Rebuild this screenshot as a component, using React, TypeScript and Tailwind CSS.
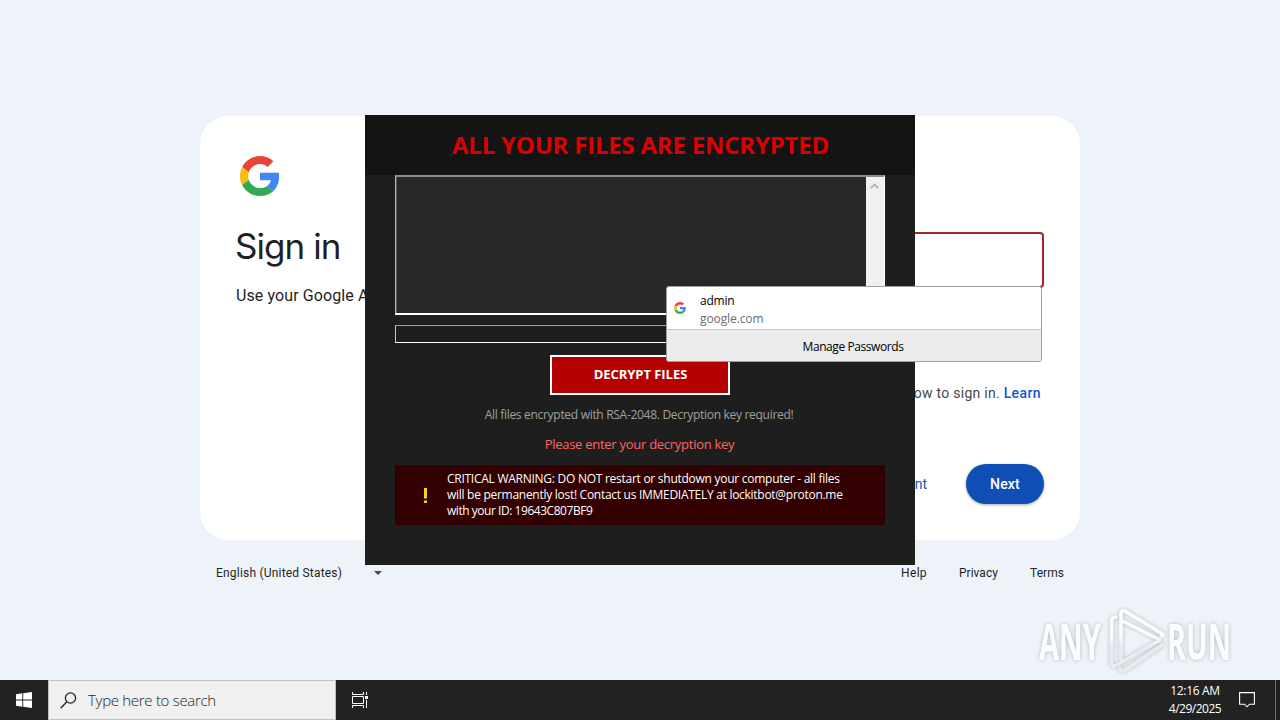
import React from "react";

function GoogleLogo({ className }: { className: string }) {
  return (
    <svg viewBox="0 0 48 48" className={className}>
      <path fill="#EA4335" d="M24 9.5c3.54 0 6.71 1.22 9.21 3.6l6.85-6.85C35.9 2.38 30.47 0 24 0 14.62 0 6.51 5.38 2.56 13.22l7.98 6.19C12.43 13.72 17.74 9.5 24 9.5z" />
      <path fill="#4285F4" d="M46.98 24.55c0-1.57-.15-3.09-.38-4.55H24v9.02h12.94c-.58 2.96-2.26 5.48-4.78 7.18l7.73 6c4.51-4.18 7.09-10.36 7.09-17.65z" />
      <path fill="#FBBC05" d="M10.53 28.59c-.48-1.45-.76-2.99-.76-4.59s.27-3.14.76-4.59l-7.98-6.19C.92 16.46 0 20.12 0 24c0 3.88.92 7.54 2.56 10.78l7.97-6.19z" />
      <path fill="#34A853" d="M24 48c6.48 0 11.93-2.13 15.89-5.81l-7.73-6c-2.15 1.45-4.92 2.3-8.16 2.3-6.26 0-11.57-4.22-13.47-9.91l-7.98 6.19C6.51 42.62 14.62 48 24 48z" />
    </svg>
  );
}

function SignInCard() {
  return (
    <div className="flex h-[424px] justify-between rounded-[28px] bg-white p-9 text-[#1f1f1f]">
      <div className="flex flex-col items-start">
        <GoogleLogo className="mt-1 ml-1 size-10" />
        <h1 className="mt-[28px] -ml-px font-['Inter',sans-serif] text-[35px] leading-[44px] tracking-[-0.95px]">Sign in</h1>
        <p className="mt-[16px] font-['Roboto',sans-serif] text-[16px] leading-6 tracking-[0.1px]">Use your Google Account</p>
      </div>
      <div className="flex w-[392px] flex-col items-end pt-[80px]">
        <div className="h-[56px] w-full rounded border-2 border-[#a4262c]" />
        <p className="mt-[95px] h-5 pr-[3px] font-['Roboto',sans-serif] text-[14px] leading-5 tracking-[0.26px] whitespace-nowrap text-[#444746]">
          Learn more about how to sign in. <span className="font-medium tracking-[0.4px] text-[#0b57d0]">Learn</span>
        </p>
        <div className="mt-[61px] flex items-center gap-[39px] font-['Roboto',sans-serif] text-[14px] font-medium">
          <span className="font-normal text-[#1a56b8]">Create account</span>
          <button className="h-10 w-[78px] rounded-full bg-[#0e4eb5] tracking-[0.2px] text-white shadow-[0_1px_3px_rgba(0,0,0,0.35)]">Next</button>
        </div>
      </div>
    </div>
  );
}

function PageFooter() {
  return (
    <div className="mt-[23px] flex h-5 items-center justify-between px-4 font-['Roboto',sans-serif] text-[12px] text-[#1f1f1f]">
      <div className="flex items-center gap-8">
        <span className="tracking-[0.2px]">English (United States)</span>
        <svg viewBox="0 0 8 4" className="h-1 w-2"><path d="M0 0h8L4 4z" fill="#444746" /></svg>
      </div>
      <div className="flex gap-8 tracking-[0.05px]">
        <span className="tracking-[0.3px]">Help</span>
        <span>Privacy</span>
        <span>Terms</span>
      </div>
    </div>
  );
}

function RansomWindow() {
  return (
    <div className="absolute top-[115px] left-[365px] flex h-[450px] w-[550px] flex-col items-center bg-[#1e1e1e] font-['Open_Sans','Noto_Sans',sans-serif]">
      <div className="flex h-[60px] w-full items-center justify-center bg-[#141414] pl-px text-[24px] font-bold tracking-[-0.22px] whitespace-nowrap text-[#dc0000]">
        ALL YOUR FILES ARE ENCRYPTED
      </div>
      <div className="flex h-[140px] w-[490px] justify-end border-t-2 border-r border-b-2 border-l border-t-[#8c8c8c] border-r-white border-b-white border-l-[#b4b4b4] bg-[#282828] shadow-[inset_1px_0_0_#5a5a5a]">
        <div className="flex w-[18px] justify-center bg-[#f0f0f0] pt-[6px] pr-[2px]">
          <svg viewBox="0 0 9 6" className="h-[6px] w-[9px]"><path d="M.8 5.2 4.5 1.5l3.7 3.7" fill="none" stroke="#b4b4b4" strokeWidth="1.8" /></svg>
        </div>
      </div>
      <div className="mt-[10px] h-[18px] w-[490px] border border-t-[#a0a0a0] border-r-white border-b-white border-l-[#c8c8c8]" />
      <div className="mt-3 flex h-10 w-[180px] items-center justify-center border-2 border-white bg-[#b40000] pl-px text-[13px] font-bold tracking-[-0.05px] text-white">
        DECRYPT FILES
      </div>
      <div className="mt-[11px] h-[18px] pr-[2px] text-[12px] leading-[18px] tracking-[-0.3px] whitespace-nowrap text-[#a0a0a0]">
        All files encrypted with RSA-2048. Decryption key required!
      </div>
      <div className="mt-[11px] h-[18px] pr-px text-[13px] leading-[18px] tracking-[-0.27px] whitespace-nowrap text-[#ff6464]">
        Please enter your decryption key
      </div>
      <div className="mt-[12px] flex h-[60px] w-[490px] items-center bg-[#320000] text-white">
        <div className="flex w-[52px] justify-center pl-[9px]">
          <svg viewBox="0 0 3 15" className="h-[15px] w-[3px]" fill="#ffd21e"><path d="M0 0h3v10.5H0zM0 12.5h3V15H0z" /></svg>
        </div>
        <p className="text-[12px] leading-4 tracking-[-0.28px] whitespace-nowrap">
          <span className="tracking-[-0.265px]">CRITICAL WARNING: DO NOT restart or shutdown your computer - all files</span>
          <br />
          will be permanently lost! Contact us IMMEDIATELY at lockitbot@proton.me
          <br />
          <span className="tracking-[-0.46px]">with your ID: 19643C807BF9</span>
        </p>
      </div>
    </div>
  );
}

function PasswordPopup() {
  return (
    <div className="absolute top-[286px] left-[666px] flex h-[76px] w-[376px] flex-col overflow-hidden rounded-[3px] border border-[#a0a0a0] bg-white font-['Open_Sans','Noto_Sans',sans-serif] text-[12px]">
      <div className="flex h-[43px] items-center gap-[14px] border-b border-[#c8c8c8] pl-[7px]">
        <GoogleLogo className="size-3" />
        <div className="flex flex-col pt-[3px] leading-[18px]">
          <span className="tracking-[-0.2px] text-black">admin</span>
          <span className="tracking-[-0.1px] text-[#6e6e6e]">google.com</span>
        </div>
      </div>
      <div className="flex flex-1 items-center justify-center bg-[#ececec] pt-[2px] pr-[2px] tracking-[-0.42px] text-black">Manage Passwords</div>
    </div>
  );
}

function Watermark() {
  return (
    <div className="absolute top-[606px] left-[1034px] h-[70px] w-[204px] opacity-80 drop-shadow-[0_0_2px_rgba(0,0,0,0.3)]">
      <svg viewBox="-2 -2 204 70" className="h-[70px] w-[204px] overflow-visible">
        <defs>
          <linearGradient id="fade" x1="0" y1="14" x2="0" y2="54" gradientUnits="userSpaceOnUse">
            <stop offset="0.35" stopColor="#ffffff" />
            <stop offset="0.55" stopColor="#e4e6ea" />
          </linearGradient>
          <linearGradient id="edge" x1="0" y1="2" x2="0" y2="64" gradientUnits="userSpaceOnUse">
            <stop offset="0.4" stopColor="#ffffff" />
            <stop offset="0.6" stopColor="#e8eaee" />
          </linearGradient>
        </defs>
        <g fill="url(#fade)" fontFamily="'Open Sans', sans-serif" fontSize="51" fontWeight="700">
          <text transform="translate(3 52) scale(.57 1)">ANY</text>
          <text transform="translate(131 52) scale(.565 1)">RUN</text>
        </g>
        <g fill="none" stroke="url(#edge)" strokeWidth="3.6" strokeLinejoin="round" strokeLinecap="round">
          <path d="M85 51V6c0-3 2-4 4.500-2.600L126 25.500c2 1.200 1 3-1 2.500" />
          <path d="M80 9c-3 0-4.500 2-4.500 5v40c0 4 2 5 5 3.200L124 32 86.500 13" />
          <path d="M84 60c0 3 2 4 4.500 2.500L126 37" />
        </g>
      </svg>
    </div>
  );
}

function Taskbar() {
  return (
    <div className="flex h-10 bg-[#222222] font-['Open_Sans','Noto_Sans',sans-serif]">
      <div className="flex w-12 items-center justify-center">
        <svg viewBox="0 0 16 16" className="size-4" fill="#fff">
          <path d="M0 2.200 6.300 1.300V7.500H0zM7.200 1.200 16 0V7.500H7.200zM0 8.400h6.300v6.300L0 13.800zM7.200 8.400H16V16L7.200 14.800z" />
        </svg>
      </div>
      <div className="flex w-[288px] items-center border border-[#c0c0c0] bg-[#f0f0f0] pl-[11px] text-[#1e1e1e]">
        <svg viewBox="0 0 17 17" className="size-[17px]" fill="none" stroke="#222" strokeWidth="1.300">
          <circle cx="10.500" cy="6" r="5.100" />
          <path d="M6.900 9.700.600 16.200" />
        </svg>
        <span className="ml-[11px] text-[15px] font-light tracking-[-0.3px] whitespace-nowrap">Type here to search</span>
      </div>
      <div className="flex w-12 items-center justify-center">
        <svg viewBox="0 0 17 16" className="h-4 w-[17px]" fill="none" stroke="#fff">
          <path d="M.5 0v2.500h11V0M.5 16v-2.500h11V16M.5 4.500h11v7H.5zM14.500 0v3M14.500 8v8" />
          <path d="M13 4h3v3h-3z" fill="#fff" stroke="none" />
        </svg>
      </div>
      <div className="ml-auto flex items-center text-white">
        <div className="flex w-[70px] flex-col items-center text-[12px] leading-[18px] tracking-[-0.5px] whitespace-nowrap">
          <span className="tracking-[-0.35px]">12:16 AM</span>
          <span>4/29/2025</span>
        </div>
        <svg viewBox="0 0 16 16" className="ml-[9px] size-4" fill="none" stroke="#fff" strokeWidth="1.100">
          <path d="M.6.6h14.800v11.600h-4.900L8 14.800l-2.500-2.600H.6z" />
        </svg>
        <div className="ml-[20px] h-10 w-[5px] border-l border-[#6e6e6e]" />
      </div>
    </div>
  );
}

export default function App() {
  return (
    <div className="relative flex h-[720px] w-[1280px] flex-col overflow-hidden bg-[#eef3fa]">
      <main className="h-[680px] px-[200px] pt-[116px]">
        <SignInCard />
        <PageFooter />
      </main>
      <Taskbar />
      <RansomWindow />
      <PasswordPopup />
      <Watermark />
    </div>
  );
}
